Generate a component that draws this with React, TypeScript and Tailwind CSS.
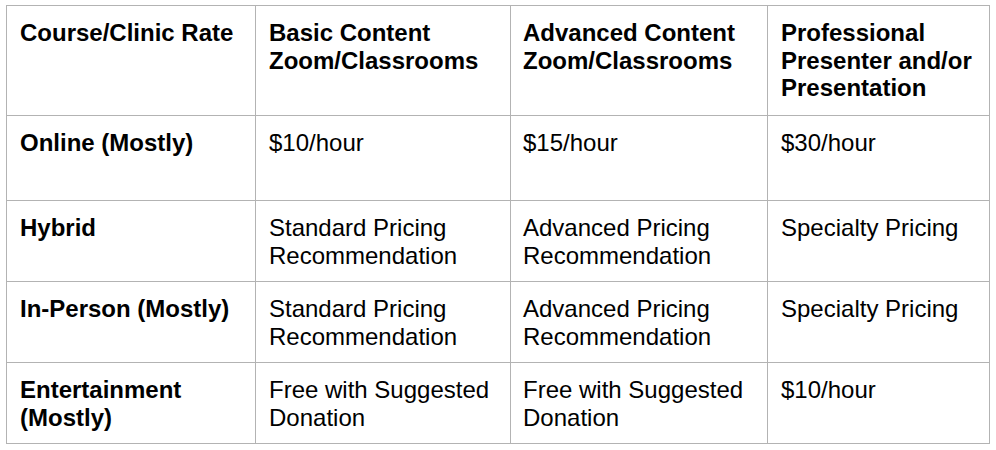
import React from "react";

const rows: { cells: string[][]; bold: boolean[] }[] = [
  {
    cells: [
      ["Course/Clinic Rate"],
      ["Basic Content", "Zoom/Classrooms"],
      ["Advanced Content", "Zoom/Classrooms"],
      ["Professional", "Presenter and/or", "Presentation"],
    ],
    bold: [true, true, true, true],
  },
  {
    cells: [["Online (Mostly)"], ["$10/hour"], ["$15/hour"], ["$30/hour"]],
    bold: [true, false, false, false],
  },
  {
    cells: [
      ["Hybrid"],
      ["Standard Pricing", "Recommendation"],
      ["Advanced Pricing", "Recommendation"],
      ["Specialty Pricing"],
    ],
    bold: [true, false, false, false],
  },
  {
    cells: [
      ["In-Person (Mostly)"],
      ["Standard Pricing", "Recommendation"],
      ["Advanced Pricing", "Recommendation"],
      ["Specialty Pricing"],
    ],
    bold: [true, false, false, false],
  },
  {
    cells: [
      ["Entertainment", "(Mostly)"],
      ["Free with Suggested", "Donation"],
      ["Free with Suggested", "Donation"],
      ["$10/hour"],
    ],
    bold: [true, false, false, false],
  },
];

export default function App() {
  return (
    <div
      className="w-[996px] h-[450px] bg-white pl-[6px] pt-[5px] text-black"
      style={{ fontFamily: '"Liberation Sans", Arial, sans-serif' }}
    >
      <div className="grid w-[984px] grid-cols-[249px_255px_257px_222px] grid-rows-[110px_85px_81px_81px_81px] border-l border-t border-[#b3b3b3]">
        {rows.map((row, ri) =>
          row.cells.map((lines, ci) => (
            <div
              key={`${ri}-${ci}`}
              className={`border-r border-b border-[#b3b3b3] pr-[8px] pt-[13px] text-[24px] leading-[27.6px] ${
                ci === 2 ? "pl-[12px]" : "pl-[13px]"
              } ${row.bold[ci] ? "font-bold" : "font-normal"}`}
            >
              {lines.map((l, li) => (
                <div key={li} className="whitespace-nowrap">
                  {l}
                </div>
              ))}
            </div>
          ))
        )}
      </div>
    </div>
  );
}
